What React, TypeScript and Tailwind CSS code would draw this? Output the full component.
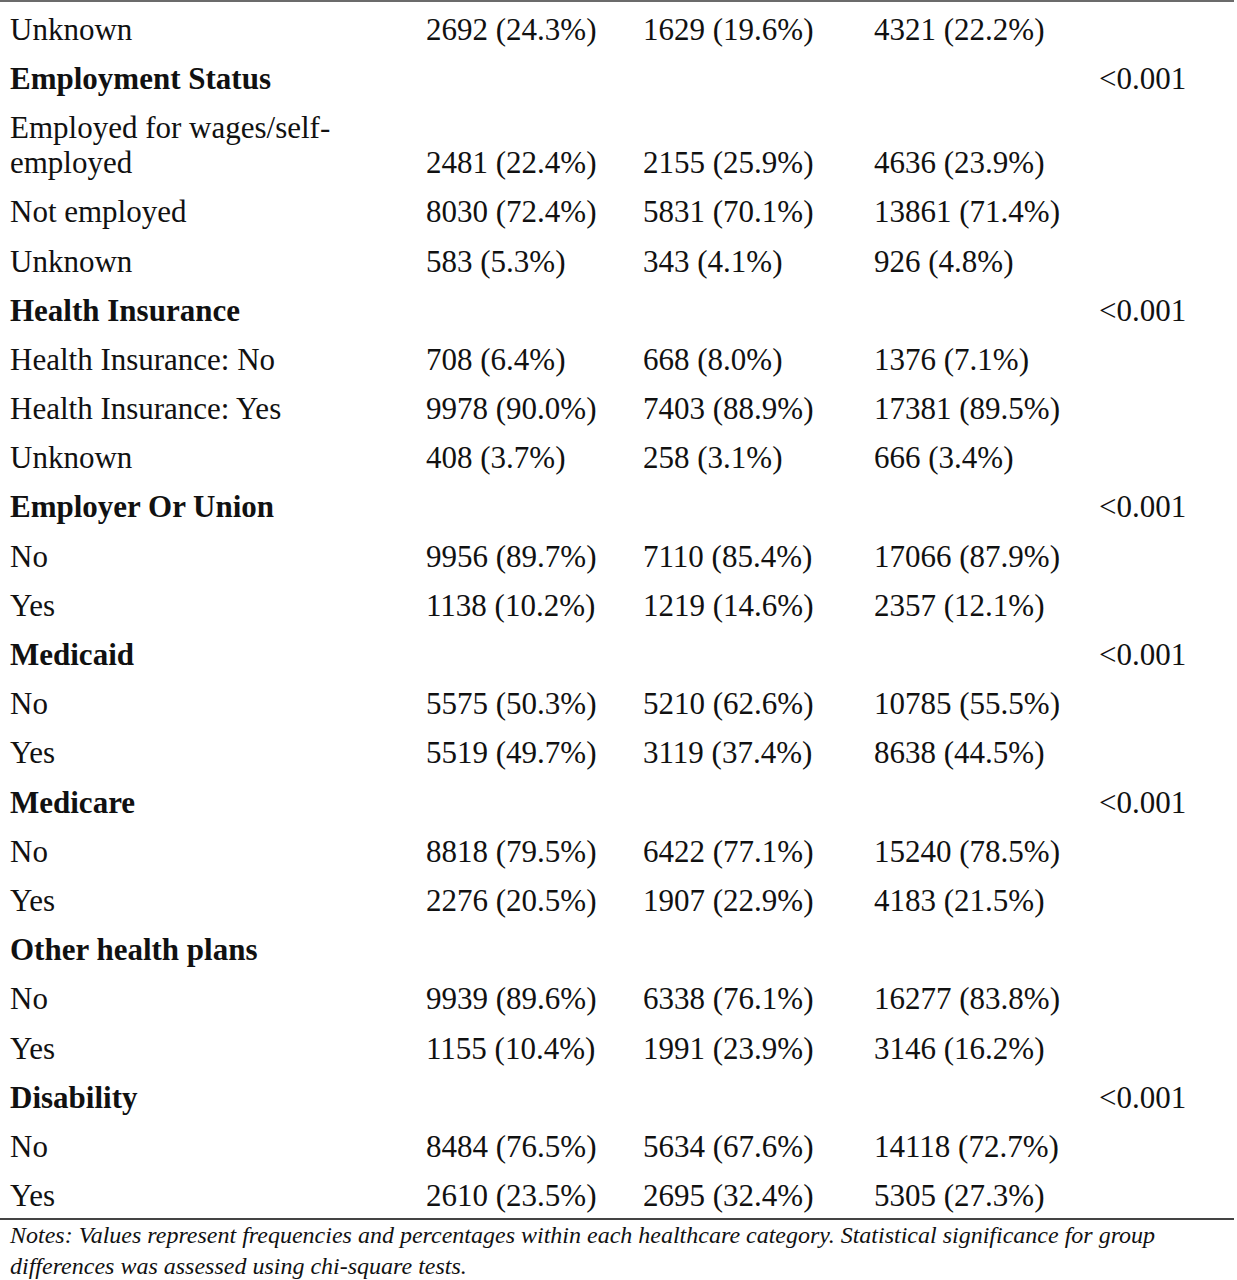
const rows: { label: React.ReactNode; head?: boolean; a?: string; b?: string; c?: string; p?: string }[] = [
  { label: 'Unknown', a: '2692 (24.3%)', b: '1629 (19.6%)', c: '4321 (22.2%)' },
  { label: 'Employment Status', head: true, p: '<0.001' },
  {
    label: (
      <>
        Employed for wages/self-
        <br />
        employed
      </>
    ),
    a: '2481 (22.4%)',
    b: '2155 (25.9%)',
    c: '4636 (23.9%)',
  },
  { label: 'Not employed', a: '8030 (72.4%)', b: '5831 (70.1%)', c: '13861 (71.4%)' },
  { label: 'Unknown', a: '583 (5.3%)', b: '343 (4.1%)', c: '926 (4.8%)' },
  { label: 'Health Insurance', head: true, p: '<0.001' },
  { label: 'Health Insurance: No', a: '708 (6.4%)', b: '668 (8.0%)', c: '1376 (7.1%)' },
  { label: 'Health Insurance: Yes', a: '9978 (90.0%)', b: '7403 (88.9%)', c: '17381 (89.5%)' },
  { label: 'Unknown', a: '408 (3.7%)', b: '258 (3.1%)', c: '666 (3.4%)' },
  { label: 'Employer Or Union', head: true, p: '<0.001' },
  { label: 'No', a: '9956 (89.7%)', b: '7110 (85.4%)', c: '17066 (87.9%)' },
  { label: 'Yes', a: '1138 (10.2%)', b: '1219 (14.6%)', c: '2357 (12.1%)' },
  { label: 'Medicaid', head: true, p: '<0.001' },
  { label: 'No', a: '5575 (50.3%)', b: '5210 (62.6%)', c: '10785 (55.5%)' },
  { label: 'Yes', a: '5519 (49.7%)', b: '3119 (37.4%)', c: '8638 (44.5%)' },
  { label: 'Medicare', head: true, p: '<0.001' },
  { label: 'No', a: '8818 (79.5%)', b: '6422 (77.1%)', c: '15240 (78.5%)' },
  { label: 'Yes', a: '2276 (20.5%)', b: '1907 (22.9%)', c: '4183 (21.5%)' },
  { label: 'Other health plans', head: true },
  { label: 'No', a: '9939 (89.6%)', b: '6338 (76.1%)', c: '16277 (83.8%)' },
  { label: 'Yes', a: '1155 (10.4%)', b: '1991 (23.9%)', c: '3146 (16.2%)' },
  { label: 'Disability', head: true, p: '<0.001' },
  { label: 'No', a: '8484 (76.5%)', b: '5634 (67.6%)', c: '14118 (72.7%)' },
  { label: 'Yes', a: '2610 (23.5%)', b: '2695 (32.4%)', c: '5305 (27.3%)' },
];

export default function App() {
  return (
    <div className="bg-white w-[1237px] min-h-[1280px] text-[#111] font-['Liberation_Serif',serif]">
      <table className="w-[1234px] border-collapse border-t-2 border-t-[#6b6b6b] border-b-2 border-b-[#444] table-fixed">
        <colgroup>
          <col className="w-[416px]" />
          <col className="w-[217px]" />
          <col className="w-[231px]" />
          <col className="w-[225px]" />
          <col />
        </colgroup>
        <tbody className="text-[31px] leading-[35px]">
          {rows.map((r, i) => (
            <tr key={i}>
              <td className={`pl-[10px] pt-[9.8px] pb-[4.4px] align-bottom ${r.head ? 'font-bold' : ''}`}>{r.label}</td>
              <td className="pl-[10px] pt-[9.8px] pb-[4.4px] align-bottom whitespace-nowrap">{r.a}</td>
              <td className="pl-[10px] pt-[9.8px] pb-[4.4px] align-bottom whitespace-nowrap">{r.b}</td>
              <td className="pl-[10px] pt-[9.8px] pb-[4.4px] align-bottom whitespace-nowrap">{r.c}</td>
              <td className="pl-[10px] pt-[9.8px] pb-[4.4px] align-bottom whitespace-nowrap">{r.p}</td>
            </tr>
          ))}
        </tbody>
      </table>
      <p className="pl-[10px] italic text-[24px] leading-[31px] whitespace-nowrap">
        Notes: Values represent frequencies and percentages within each healthcare category. Statistical significance for group
        <br />
        differences was assessed using chi-square tests.
      </p>
    </div>
  );
}
